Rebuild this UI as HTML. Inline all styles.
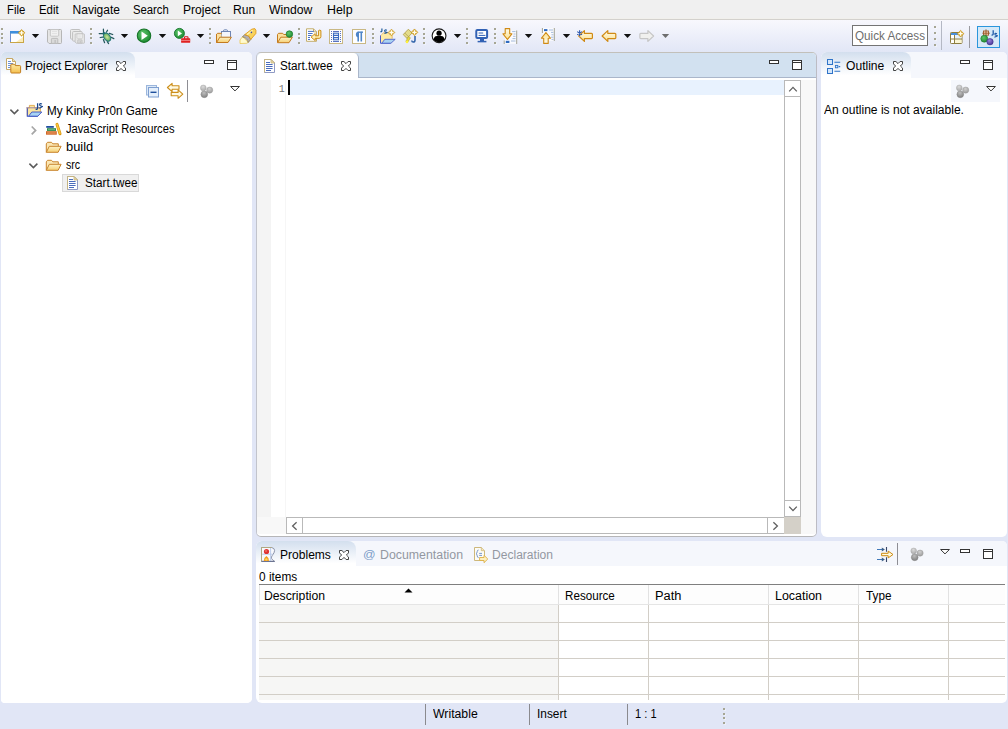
<!DOCTYPE html><html><head><meta charset="utf-8"><title>Eclipse</title><style>
html,body{margin:0;padding:0}
body{width:1008px;height:729px;overflow:hidden;background:#e1e6f6;position:relative;
 font-family:"Liberation Sans",sans-serif;font-size:12px;color:#000}
div,span,svg{position:absolute;box-sizing:border-box}
.t{white-space:nowrap;line-height:14px;height:14px;transform-origin:0 0}
#menubar{left:0;top:0;width:1008px;height:19px;background:#f0f0f0}
#menuline{left:0;top:18px;width:1008px;height:2px;background:linear-gradient(#f1f0ec 50%,#d3d1cd 50%)}
#toolbar{left:0;top:20px;width:1008px;height:33px;background:linear-gradient(#f8f8fd,#e1e6f6)}
.panel{background:#fff;border-radius:7px 7px 7px 7px;overflow:hidden}
.hd{left:0;top:0;right:0;height:25px;background:#f5f7fc}
.dots i{position:absolute;left:0;width:2px;height:2px;background:#a6a694;box-shadow:1px 1px 0 rgba(255,255,255,.4)}
.dd{width:0;height:0;border-left:3.5px solid transparent;border-right:3.5px solid transparent;border-top:4px solid #111}
.sep{width:1px;background:#a9a9a9}
</style></head><body>
<div id="menubar"></div><div id="menuline"></div><div id="toolbar"></div>
<span class="t" id="t_m_file" style="left:7.06px;top:3px;transform:scaleX(0.9444)">File</span>
<span class="t" id="t_m_edit" style="left:38.65px;top:3px;transform:scaleX(0.95)">Edit</span>
<span class="t" id="t_m_nav" style="left:72.6px;top:3px;transform:scaleX(1)">Navigate</span>
<span class="t" id="t_m_search" style="left:133.36px;top:3px;transform:scaleX(0.9417)">Search</span>
<span class="t" id="t_m_proj" style="left:182.5px;top:3px;transform:scaleX(1.0028)">Project</span>
<span class="t" id="t_m_run" style="left:233.49px;top:3px;transform:scaleX(1.01)">Run</span>
<span class="t" id="t_m_win" style="left:269.2px;top:3px;transform:scaleX(1.0163)">Window</span>
<span class="t" id="t_m_help" style="left:326.67px;top:3px;transform:scaleX(1.0348)">Help</span>
<div class="panel" id="left" style="left:1px;top:52px;width:251px;height:651px;border-radius:5px 5px 5px 4px"><div class="hd" style="height:26px"></div><div style="left:0;top:0;width:134px;height:26px;background:linear-gradient(#d3dfee,#e9eff7 45%,#ffffff 90%);border-radius:0 8px 0 0"></div><div style="left:0;top:26px;width:252px;height:625px;background:#fff"></div></div>
<svg style="left:116px;top:61px" width="10" height="10" viewBox="0 0 10 10"><path d="M0.5 0.5h2.4l2.1 2.1l2.1-2.1h2.4v2.4l-2.1 2.1l2.1 2.1v2.4h-2.4l-2.1-2.1l-2.1 2.1h-2.4v-2.4l2.1-2.1l-2.1-2.1z" fill="#fff" stroke="#363636" stroke-width="0.95" stroke-linejoin="miter"/></svg>
<div style="left:204px;top:60px;width:10px;height:4px;border:1px solid #333;background:#fff"></div><div style="left:227px;top:60px;width:10px;height:10px;border:1px solid #333;background:#fff"><div style="left:0;top:1px;width:8px;height:1px;background:#333"></div></div>
<svg style="left:229px;top:84.5px" width="12" height="8" viewBox="-1 -1 12 8"><path d="M0.6 0.5h8.8L5 4.9z" fill="#fff" stroke="#333" stroke-width="1" stroke-linejoin="miter"/></svg>
<div class="sep" style="left:187px;top:80px;height:22px;background:#8e8e94"></div>
<div style="left:62px;top:174px;width:77px;height:18px;background:#f0f0f0;border:1px solid #d9d9d9"></div>
<svg style="left:9.2px;top:108px" width="11" height="8" viewBox="-1 -1 11 8"><path d="M0.4 0.6L4.4 4.6L8.4 0.6" fill="none" stroke="#5a5a5a" stroke-width="1.5"/></svg>
<svg style="left:30.2px;top:125px" width="8" height="11" viewBox="-1 -1 8 11"><path d="M0.7 0.5L4.6 4.4L0.7 8.3" fill="none" stroke="#a6a6a6" stroke-width="1.7"/></svg>
<svg style="left:28.2px;top:162px" width="11" height="8" viewBox="-1 -1 11 8"><path d="M0.4 0.6L4.4 4.6L8.4 0.6" fill="none" stroke="#5a5a5a" stroke-width="1.5"/></svg>
<div class="panel" id="editor" style="left:256px;top:52px;width:561px;height:485px;border:1px solid #b6b6b8;border-top-color:#c2c0ba;border-left-color:#c2c4cc;border-right-color:#bcbcc4;border-radius:5px"><div class="hd" style="background:#d2e1f0;height:24px"></div><div style="left:0;top:0;width:102px;height:25px;background:#fff;border-radius:5px 5px 0 0;border-right:1px solid #aab6ca"></div><div style="left:101px;top:24px;width:458px;height:1px;background:#aab6ca"></div><div style="left:0;top:27px;width:14px;height:437px;background:#f4f4f4"></div><div style="left:0;top:464px;width:29px;height:17px;background:#f8f8f8"></div><div style="left:28px;top:27px;width:1px;height:437px;background:#f6f6f6"></div><div style="left:33px;top:27px;width:494px;height:15px;background:#e8f2fe"></div><div style="left:31px;top:27px;width:2px;height:15px;background:#000"></div><div style="left:527px;top:27px;width:17px;height:437px;background:#fff;border:1px solid #b9b9b9"></div><div style="left:527px;top:27px;width:17px;height:17px;background:#fff;border:1px solid #b9b9b9"></div><div style="left:527px;top:447px;width:17px;height:17px;background:#fff;border:1px solid #b9b9b9"></div><div style="left:29px;top:464px;width:499px;height:17px;background:#fff;border:1px solid #b9b9b9"></div><div style="left:29px;top:464px;width:17px;height:17px;background:#fff;border:1px solid #b9b9b9"></div><div style="left:510px;top:464px;width:18px;height:17px;background:#fff;border:1px solid #b9b9b9"></div><div style="left:527px;top:464px;width:17px;height:17px;background:#d4d0c8"></div><div style="left:544px;top:27px;width:15px;height:454px;background:#f8f8f8"></div></div>
<svg style="left:341px;top:61px" width="10" height="10" viewBox="0 0 10 10"><path d="M0.5 0.5h2.4l2.1 2.1l2.1-2.1h2.4v2.4l-2.1 2.1l2.1 2.1v2.4h-2.4l-2.1-2.1l-2.1 2.1h-2.4v-2.4l2.1-2.1l-2.1-2.1z" fill="#fff" stroke="#363636" stroke-width="0.95" stroke-linejoin="miter"/></svg>
<div style="left:769px;top:60px;width:10px;height:4px;border:1px solid #333;background:#fff"></div><div style="left:792px;top:60px;width:10px;height:10px;border:1px solid #333;background:#fff"><div style="left:0;top:1px;width:8px;height:1px;background:#333"></div></div>
<svg style="left:787.5px;top:84.5px" width="10" height="10" viewBox="0 0 10 10"><path d="M1.2 6.4L5 2.4L8.8 6.4" fill="none" stroke="#606060" stroke-width="1.3"/></svg>
<svg style="left:787.5px;top:503.5px" width="10" height="10" viewBox="0 0 10 10"><path d="M1.2 2.6L5 6.6L8.8 2.6" fill="none" stroke="#606060" stroke-width="1.3"/></svg>
<svg style="left:290px;top:520.5px" width="10" height="10" viewBox="0 0 10 10"><path d="M6.6 1.2L2.6 5L6.6 8.8" fill="none" stroke="#606060" stroke-width="1.3"/></svg>
<svg style="left:770px;top:520.5px" width="10" height="10" viewBox="0 0 10 10"><path d="M3.4 1.2L7.4 5L3.4 8.8" fill="none" stroke="#606060" stroke-width="1.3"/></svg>
<div class="panel" id="outlinep" style="left:821px;top:52px;width:186px;height:485px;border-radius:6px 5px 5px 6px"><div class="hd" style="height:26px"></div><div style="left:0;top:0;width:90px;height:26px;background:linear-gradient(#d3dfee,#e9eff7 45%,#ffffff 90%);border-radius:0 8px 0 0"></div><div style="left:130px;top:28px;width:49px;height:22px;background:#f5f7fc"></div></div>
<svg style="left:893px;top:61px" width="10" height="10" viewBox="0 0 10 10"><path d="M0.5 0.5h2.4l2.1 2.1l2.1-2.1h2.4v2.4l-2.1 2.1l2.1 2.1v2.4h-2.4l-2.1-2.1l-2.1 2.1h-2.4v-2.4l2.1-2.1l-2.1-2.1z" fill="#fff" stroke="#363636" stroke-width="0.95" stroke-linejoin="miter"/></svg>
<div style="left:960px;top:60px;width:10px;height:4px;border:1px solid #333;background:#fff"></div><div style="left:983px;top:60px;width:10px;height:10px;border:1px solid #333;background:#fff"><div style="left:0;top:1px;width:8px;height:1px;background:#333"></div></div>
<svg style="left:985px;top:84.5px" width="12" height="8" viewBox="-1 -1 12 8"><path d="M0.6 0.5h8.8L5 4.9z" fill="#fff" stroke="#333" stroke-width="1" stroke-linejoin="miter"/></svg>
<div class="panel" id="bottom" style="left:256px;top:541px;width:751px;height:162px;border-radius:6px 5px 5px 6px"><div class="hd"></div><div style="left:0;top:0;width:100px;height:25px;background:linear-gradient(#d3dfee,#e9eff7 45%,#ffffff 90%);border-radius:0 8px 0 0"></div></div>
<svg style="left:339px;top:550px" width="10" height="10" viewBox="0 0 10 10"><path d="M0.5 0.5h2.4l2.1 2.1l2.1-2.1h2.4v2.4l-2.1 2.1l2.1 2.1v2.4h-2.4l-2.1-2.1l-2.1 2.1h-2.4v-2.4l2.1-2.1l-2.1-2.1z" fill="#fff" stroke="#363636" stroke-width="0.95" stroke-linejoin="miter"/></svg>
<div style="left:960px;top:549px;width:10px;height:4px;border:1px solid #333;background:#fff"></div><div style="left:983px;top:549px;width:10px;height:10px;border:1px solid #333;background:#fff"><div style="left:0;top:1px;width:8px;height:1px;background:#333"></div></div>
<svg style="left:939px;top:547.5px" width="12" height="8" viewBox="-1 -1 12 8"><path d="M0.6 0.5h8.8L5 4.9z" fill="#fff" stroke="#333" stroke-width="1" stroke-linejoin="miter"/></svg>
<div class="sep" style="left:897px;top:543px;height:22px;background:#8e8e94"></div>
<div style="left:259px;top:584px;width:746px;height:1px;background:#7f7f7f"></div>
<div style="left:259px;top:585px;width:746px;height:19px;background:#fdfdfd"></div>
<div style="left:259px;top:604px;width:746px;height:1px;background:#e5e5e5"></div>
<div style="left:259px;top:605px;width:299px;height:95px;background:#f6f6f5"></div>
<div style="left:259px;top:622px;width:746px;height:1px;background:#d2cec7"></div>
<div style="left:259px;top:640px;width:746px;height:1px;background:#d2cec7"></div>
<div style="left:259px;top:658px;width:746px;height:1px;background:#d2cec7"></div>
<div style="left:259px;top:676px;width:746px;height:1px;background:#d2cec7"></div>
<div style="left:259px;top:694px;width:746px;height:1px;background:#d2cec7"></div>
<div style="left:558px;top:605px;width:1px;height:95px;background:#d2cec7"></div>
<div style="left:558px;top:585px;width:1px;height:19px;background:#e2e2e2"></div>
<div style="left:648px;top:605px;width:1px;height:95px;background:#d2cec7"></div>
<div style="left:648px;top:585px;width:1px;height:19px;background:#e2e2e2"></div>
<div style="left:768px;top:605px;width:1px;height:95px;background:#d2cec7"></div>
<div style="left:768px;top:585px;width:1px;height:19px;background:#e2e2e2"></div>
<div style="left:858px;top:605px;width:1px;height:95px;background:#d2cec7"></div>
<div style="left:858px;top:585px;width:1px;height:19px;background:#e2e2e2"></div>
<div style="left:948px;top:605px;width:1px;height:95px;background:#d2cec7"></div>
<div style="left:948px;top:585px;width:1px;height:19px;background:#e2e2e2"></div>
<div style="left:259px;top:585px;width:1px;height:19px;background:#e5e5e5"></div>
<svg style="left:404px;top:588px" width="9" height="5" viewBox="0 0 9 5"><path d="M0.5 4.5L4.5 0.5L8.5 4.5z" fill="#000"/></svg>
<div class="sep" style="left:425px;top:704px;height:21px;background:#8a8a8e"></div>
<div class="sep" style="left:529px;top:704px;height:21px;background:#8a8a8e"></div>
<div class="sep" style="left:627px;top:704px;height:21px;background:#8a8a8e"></div>
<div class="dots" style="left:723px;top:708px;width:2px;height:16px"><i style="top:0px"></i><i style="top:4.5px"></i><i style="top:9px"></i><i style="top:13.5px"></i></div>
<div class="dots" style="left:1px;top:28px;width:2px;height:16px"><i style="top:0px"></i><i style="top:4.5px"></i><i style="top:9px"></i><i style="top:13.5px"></i></div>
<div class="dots" style="left:90px;top:28px;width:2px;height:16px"><i style="top:0px"></i><i style="top:4.5px"></i><i style="top:9px"></i><i style="top:13.5px"></i></div>
<div class="dots" style="left:209px;top:28px;width:2px;height:16px"><i style="top:0px"></i><i style="top:4.5px"></i><i style="top:9px"></i><i style="top:13.5px"></i></div>
<div class="dots" style="left:298px;top:28px;width:2px;height:16px"><i style="top:0px"></i><i style="top:4.5px"></i><i style="top:9px"></i><i style="top:13.5px"></i></div>
<div class="dots" style="left:372px;top:28px;width:2px;height:16px"><i style="top:0px"></i><i style="top:4.5px"></i><i style="top:9px"></i><i style="top:13.5px"></i></div>
<div class="dots" style="left:423px;top:28px;width:2px;height:16px"><i style="top:0px"></i><i style="top:4.5px"></i><i style="top:9px"></i><i style="top:13.5px"></i></div>
<div class="dots" style="left:466px;top:28px;width:2px;height:16px"><i style="top:0px"></i><i style="top:4.5px"></i><i style="top:9px"></i><i style="top:13.5px"></i></div>
<div class="dots" style="left:494px;top:28px;width:2px;height:16px"><i style="top:0px"></i><i style="top:4.5px"></i><i style="top:9px"></i><i style="top:13.5px"></i></div>
<svg style="left:31px;top:33px" width="9" height="6" viewBox="-1 -1 9 6"><path d="M-0.2 0h7.4L3.5 4.1z" fill="#111"/></svg>
<svg style="left:120.3px;top:33px" width="9" height="6" viewBox="-1 -1 9 6"><path d="M-0.2 0h7.4L3.5 4.1z" fill="#111"/></svg>
<svg style="left:158px;top:33px" width="9" height="6" viewBox="-1 -1 9 6"><path d="M-0.2 0h7.4L3.5 4.1z" fill="#111"/></svg>
<svg style="left:196px;top:33px" width="9" height="6" viewBox="-1 -1 9 6"><path d="M-0.2 0h7.4L3.5 4.1z" fill="#111"/></svg>
<svg style="left:262px;top:33px" width="9" height="6" viewBox="-1 -1 9 6"><path d="M-0.2 0h7.4L3.5 4.1z" fill="#111"/></svg>
<svg style="left:453px;top:33px" width="9" height="6" viewBox="-1 -1 9 6"><path d="M-0.2 0h7.4L3.5 4.1z" fill="#111"/></svg>
<svg style="left:523.8px;top:33px" width="9" height="6" viewBox="-1 -1 9 6"><path d="M-0.2 0h7.4L3.5 4.1z" fill="#111"/></svg>
<svg style="left:562px;top:33px" width="9" height="6" viewBox="-1 -1 9 6"><path d="M-0.2 0h7.4L3.5 4.1z" fill="#111"/></svg>
<svg style="left:623px;top:33px" width="9" height="6" viewBox="-1 -1 9 6"><path d="M-0.2 0h7.4L3.5 4.1z" fill="#111"/></svg>
<svg style="left:661px;top:33px" width="9" height="6" viewBox="-1 -1 9 6"><path d="M-0.2 0h7.4L3.5 4.1z" fill="#6e6e6e"/></svg>
<div style="left:852px;top:25px;width:76px;height:21px;background:#fff;border:1px solid #747474"></div>
<div class="dots" style="left:934.3px;top:26px;width:2px;height:22px"><i style="top:0px"></i><i style="top:6.1px"></i><i style="top:12.2px"></i><i style="top:18.3px"></i></div>
<div class="sep" style="left:941px;top:21px;height:29px;background:#b4b8c4"></div>
<div class="sep" style="left:969px;top:26px;height:22px;background:#9a9aa0"></div>
<div style="left:977px;top:26px;width:23px;height:22px;background:#d6e9f8;border:1px solid #2a96dc"></div>
<svg style="left:0;top:0" width="1008" height="729" viewBox="0 0 1008 729"><defs>
<linearGradient id="gFold" x1="0" y1="0" x2="0" y2="1"><stop offset="0" stop-color="#fdf3c8"/><stop offset="1" stop-color="#f6cf72"/></linearGradient>
<linearGradient id="gFoldY" x1="0" y1="0" x2="0" y2="1"><stop offset="0" stop-color="#fdeca8"/><stop offset="1" stop-color="#f4be4c"/></linearGradient>
<linearGradient id="gBlue" x1="0" y1="0" x2="0" y2="1"><stop offset="0" stop-color="#a9c8f4"/><stop offset="1" stop-color="#4a78d0"/></linearGradient>
<linearGradient id="gArr" x1="0" y1="0" x2="0" y2="1"><stop offset="0" stop-color="#fffdf0"/><stop offset="1" stop-color="#fce08a"/></linearGradient>
<radialGradient id="gGreen" cx="0.4" cy="0.35" r="0.7"><stop offset="0" stop-color="#5cc46a"/><stop offset="1" stop-color="#1c8a30"/></radialGradient>
<radialGradient id="gGray1" cx="0.45" cy="0.3" r="0.75"><stop offset="0" stop-color="#dadada"/><stop offset="1" stop-color="#a8a8a8"/></radialGradient><radialGradient id="gGray2" cx="0.45" cy="0.3" r="0.75"><stop offset="0" stop-color="#d0d0d0"/><stop offset="1" stop-color="#989898"/></radialGradient><radialGradient id="gGray3" cx="0.45" cy="0.3" r="0.75"><stop offset="0" stop-color="#bebebe"/><stop offset="1" stop-color="#7c7c7c"/></radialGradient>
<radialGradient id="gPurp" cx="0.4" cy="0.3" r="0.7"><stop offset="0" stop-color="#9a86d8"/><stop offset="1" stop-color="#4b3a9c"/></radialGradient>
<radialGradient id="gBug" cx="0.5" cy="0.5" r="0.6"><stop offset="0" stop-color="#d4e89a"/><stop offset="1" stop-color="#3f9a50"/></radialGradient>
</defs><g transform="translate(10 29)"><rect x="0.5" y="2.5" width="13" height="11" fill="#fff" stroke="#c9a646"/><path d="M0.5 4.5V13" stroke="#6f8fd0"/><path d="M13 8L6 13h7z" fill="#fbe7a8" opacity=".8"/><rect x="0" y="2" width="9.5" height="2.6" fill="#3f8fdc"/><g transform="translate(11.6 3.8) scale(0.86)"><path d="M0-3.9L3.9 0L0 3.9L-3.9 0z" fill="#d9a92c" stroke="#c08c10" stroke-width="0.6"/><path d="M0-2.5V2.5M-2.5 0H2.5" stroke="#fffdf0" stroke-width="1.5"/></g></g><g transform="translate(47 29)"><path d="M1.5 0.5h12a1 1 0 0 1 1 1v12a1 1 0 0 1-1 1h-11.4l-1.6-1.6v-11.4a1 1 0 0 1 1-1z" fill="#e6e6e6" stroke="#b6b6b6"/><path d="M3.3 0.6v5.6a1 1 0 0 0 1 1h6.4a1 1 0 0 0 1-1v-5.6z" fill="#f1f1f1" stroke="#c2c2c2" stroke-width="0.9"/><path d="M5 2.6h5M5 4.6h5" stroke="#dcdcdc" stroke-width="0.8"/><path d="M4.4 14.4v-4.2a0.8 0.8 0 0 1 .8-.8h4.8a0.8 0.8 0 0 1 .8 .8v4.2z" fill="#dadada" stroke="#b8b8b8" stroke-width="0.9"/><rect x="7.4" y="11" width="1.6" height="3.2" fill="#c4c4c4"/></g><g transform="translate(70 29)"><rect x="0.5" y="0.5" width="9.6" height="9.6" rx="1" fill="#ececec" stroke="#c0c0c0"/><rect x="2.6" y="2.5" width="9.6" height="9.6" rx="1" fill="#ececec" stroke="#c0c0c0"/><g transform="translate(4.8 4.5) scale(0.67)"><path d="M1.5 0.5h12a1 1 0 0 1 1 1v12a1 1 0 0 1-1 1h-11.4l-1.6-1.6v-11.4a1 1 0 0 1 1-1z" fill="#e6e6e6" stroke="#b6b6b6"/><path d="M3.3 0.6v5.6a1 1 0 0 0 1 1h6.4a1 1 0 0 0 1-1v-5.6z" fill="#f1f1f1" stroke="#c2c2c2" stroke-width="0.9"/><path d="M5 2.6h5M5 4.6h5" stroke="#dcdcdc" stroke-width="0.8"/><path d="M4.4 14.4v-4.2a0.8 0.8 0 0 1 .8-.8h4.8a0.8 0.8 0 0 1 .8 .8v4.2z" fill="#dadada" stroke="#b8b8b8" stroke-width="0.9"/><rect x="7.4" y="11" width="1.6" height="3.2" fill="#c4c4c4"/></g></g><g transform="translate(0 0)"><path d="M103.6 32.8L103.4 29.2M106.4 32.2L107.5 30.2M99.2 33.6H102.6M100.2 37.5L102.8 37.2M103.4 39.6L104.6 42.7M107.3 41.6L108.6 43.6M109.4 33.3L112.7 34.5M111.2 37.3L113.8 38.6" stroke="#25585c" stroke-width="1.25" fill="none" stroke-linecap="round"/><circle cx="104" cy="33.6" r="1.5" fill="#1f6a70"/><ellipse cx="107.1" cy="37.1" rx="3.1" ry="4.5" transform="rotate(-38 107.1 37.1)" fill="url(#gBug)" stroke="#1f7078" stroke-width="1"/></g><g transform="translate(144 35.7)"><circle r="6.7" fill="url(#gGreen)" stroke="#167428" stroke-width="1.1"/><path d="M-2.5-4.3L3.8 0L-2.5 4.3z" fill="#fff"/></g><g transform="translate(174 28)"><circle cx="5.4" cy="5.4" r="5" fill="url(#gGreen)" stroke="#14742a" stroke-width="0.9"/><path d="M3.8 2.6L8 5.4L3.8 8.2z" fill="#fff"/><rect x="10.4" y="8.8" width="3.6" height="2.4" rx="0.7" fill="none" stroke="#d41818" stroke-width="1.1"/><rect x="7.1" y="10.3" width="9.1" height="4.5" rx="0.6" fill="#e02020"/><path d="M7.1 12.4h9.1" stroke="#f49a9a" stroke-width="0.8"/></g><g transform="translate(216 29)"><rect x="7.5" y="0.8" width="4" height="2.4" rx="1" fill="none" stroke="#6f86b4" stroke-width="1"/><rect x="5.5" y="2.5" width="9" height="6" fill="#f4f6fb" stroke="#6f86b4"/><path d="M0.5 13.5v-8l1-1.2h4.3" fill="#fbe0a0" stroke="#c47a1e"/><path d="M0.5 13.5v-8h5v3h0" fill="#fbe0a0"/><path d="M0.6 13.5l3.2-5.3h11.6l-3.4 5.3z" fill="url(#gFold)" stroke="#c47a1e" stroke-linejoin="round"/><path d="M0.5 5v8.5" stroke="#c47a1e"/></g><g transform="translate(0 0)"><path d="M242.6 36.6L240 40V43.5L246.6 43.3L248.2 42.4z" fill="#fffbd0" stroke="#ecc64c" stroke-width="0.8" stroke-linejoin="round"/><path d="M242.4 36.8L244.8 34.6Q249.6 35 250.8 39.4L248.2 42.5Q247.6 38 242.4 36.8z" fill="#b4aeb0" stroke="#8c7c4c" stroke-width="0.8" stroke-linejoin="round"/><path d="M244.8 34.6L251.8 29.2L254.8 28.6L255.9 30.2V33.4L250.8 39.4Q249.6 35 244.8 34.6z" fill="#f8d25c" stroke="#e09a1c" stroke-width="0.9" stroke-linejoin="round"/><path d="M247 34.6L252.6 30.2" stroke="#fff2a8" stroke-width="1.4"/><circle cx="251.4" cy="32.4" r="0.8" fill="#3a48a0"/></g><g transform="translate(277 31.5)"><path d="M0.5 11v-8l1-1.2h4.2l1 1.2h5v2.6" fill="#fbe0a0" stroke="#c47a1e"/><path d="M0.6 11.2l3.2-5.5h11.6l-3.4 5.5z" fill="url(#gFold)" stroke="#c47a1e" stroke-linejoin="round"/><circle cx="12.4" cy="2.6" r="3.3" fill="url(#gGreen)" stroke="#1f7a30" stroke-width="0.7"/></g><g transform="translate(0 0)"><path d="M306.5 28.8H313.5L316.5 31.8V41.3H306.5z" fill="#fff" stroke="#c4ae6c"/><path d="M313.5 28.8V31.8H316.5" fill="none" stroke="#c4ae6c"/><path d="M308 31.4H313.8M308 33.5H312.6M308 35.5H311.6M308 37.5H310M308 39.5H310" stroke="#4a72c8" stroke-width="1"/><path d="M318.6 30.6Q319.8 29.6 320.9 30.6V36.6Q320.9 38.3 319.2 38.3H315.2V40.6L311.1 37.1L315.2 33.6V35.8H318.6z" fill="#fdf0b8" stroke="#cc8a10" stroke-width="1" stroke-linejoin="round"/></g><g transform="translate(0 0)"><rect x="329.5" y="29.5" width="13" height="14" fill="#fff" stroke="#c9b884"/><path d="M331.5 31v12M340.5 31v12" stroke="#5a72c0" stroke-width="1" stroke-dasharray="1 1"/><path d="M333 31.5h6M333 41.5h6" stroke="#5a72c0" stroke-width="1"/><rect x="333.5" y="33.2" width="5" height="6.6" fill="#fff" stroke="#3a6ac0" stroke-width="1.1"/><path d="M334 35.4h4M334 37.6h4" stroke="#3a6ac0" stroke-width="1.1"/></g><g transform="translate(352 29)"><rect x="0.5" y="0.5" width="13" height="14" fill="#fff" stroke="#c9b884"/><path d="M6.2 12.5v-9.8M9.3 12.5v-9.8" stroke="#4f86c8" stroke-width="1.6"/><path d="M11 3.2H6.6" stroke="#4f86c8" stroke-width="1.4"/><path d="M6.8 2.5a2.9 2.9 0 0 0 0 5.8z" fill="#4f86c8"/></g><g transform="translate(0 0)"><path d="M380.5 42.5V35.8L383.6 32.7H387.6L389 34.2H392.2V39.3" fill="#fdeaa4" stroke="#dca03c" stroke-width="0.9" stroke-dasharray="1.2 0.6"/><path d="M380.5 35.5V43.3H390.6" fill="none" stroke="#4a5cc8" stroke-width="1"/><path d="M381.8 43.2L384.8 39.3H395.2L391 43.2z" fill="#a9d2f2" stroke="#5064c8" stroke-width="0.9" stroke-linejoin="round"/><path d="M381.9 28.4V30.8Q381.9 32 380.4 31.6" fill="none" stroke="#1f5a9a" stroke-width="1.2"/><path d="M386.9 30.2Q384.6 29.4 384.6 30.7T386.6 32.2T384.4 33.5" fill="none" stroke="#1f5a9a" stroke-width="1.1"/><g transform="translate(391.5 32.5) scale(0.86)"><path d="M0-3.9L3.9 0L0 3.9L-3.9 0z" fill="#d9a92c" stroke="#c08c10" stroke-width="0.6"/><path d="M0-2.5V2.5M-2.5 0H2.5" stroke="#fffdf0" stroke-width="1.5"/></g></g><g transform="translate(0 0)"><path d="M403.2 34.6L408.4 29.2L412 33L407 38.4z" fill="#e4dc8c" stroke="#b4a450" stroke-width="0.9" stroke-linejoin="round"/><path d="M404.8 33L408.6 36.8" stroke="#b4a450" stroke-width="0.8"/><path d="M408.6 36.4L410.4 37.8L407.6 42.4L405.8 41.4z" fill="#e8dc3c" stroke="#b0a030" stroke-width="0.6"/><circle cx="407" cy="42" r="1.3" fill="#fff23c"/><path d="M415 36V40.2Q415 42 413.2 42Q411.8 42 411.8 40.4" fill="none" stroke="#2f62a8" stroke-width="1.5"/><g transform="translate(414.5 32.3) scale(0.86)"><path d="M0-3.9L3.9 0L0 3.9L-3.9 0z" fill="#d9a92c" stroke="#c08c10" stroke-width="0.6"/><path d="M0-2.5V2.5M-2.5 0H2.5" stroke="#fffdf0" stroke-width="1.5"/></g></g><g transform="translate(439.05 35.7)"><circle r="6.9" fill="#fff" stroke="#1c1c1c" stroke-width="1.15"/><circle cx="0" cy="-2.5" r="2.6" fill="#000"/><path d="M-5.4 4.2Q-5.2 0.4-2.2 0.2H2.2Q5.2 0.4 5.4 4.2Q3 6.6 0 6.6T-5.4 4.2z" fill="#000"/></g><g transform="translate(0 0)"><rect x="476.3" y="30.1" width="10.8" height="7.8" rx="1" fill="#fff" stroke="#3262b4" stroke-width="2"/><path d="M478.6 33H483.2M478.6 35.4H485.4" stroke="#3262b4" stroke-width="1"/><path d="M480 38.8H484V41H480z" fill="#3262b4"/><path d="M477.6 41.6H486.4" stroke="#3262b4" stroke-width="1.5"/></g><g transform="translate(502.5 28)"><rect x="2.4" y="2.4" width="11.4" height="13.4" fill="#fff" opacity="0.75"/><path d="M14.2 2.5v13.5M1.7 12.5v3.5" stroke="#a4a494" stroke-width="1"/><path d="M9.6 3.6h3.4M11 6h2M10.6 8.3h2.4M10 10.6h3M8.5 13h4.5" stroke="#9cb4d8" stroke-width="0.9"/><rect x="3.3" y="12.8" width="3.6" height="2.2" fill="#2f6ac0"/><path d="M2.7 0.6H7.2V5.8H9.4L4.95 11.5L0.5 5.8H2.7z" fill="url(#gArr)" stroke="#d08a14" stroke-width="1.1" stroke-linejoin="round"/></g><g transform="translate(541 28)"><rect x="1.8" y="0.2" width="11" height="12.6" fill="#fff" opacity="0.75"/><path d="M13.3 0v13M1.4 0v5" stroke="#a4a494" stroke-width="1"/><path d="M8 2h4M10 4.4h2.4M10.5 6.8h2M10 9.2h2.4M10.5 11.4h2" stroke="#9cb4d8" stroke-width="0.9"/><rect x="3" y="1.1" width="3.4" height="2" fill="#2f6ac0"/><g transform="translate(0 16) scale(1 -1)"><path d="M2.7 0.6H7.2V5.8H9.4L4.95 11.5L0.5 5.8H2.7z" fill="url(#gArr)" stroke="#d08a14" stroke-width="1.1" stroke-linejoin="round"/></g></g><g transform="translate(578 30)"><path d="M0.7 6L6.4 0.6v2.8h7.2a0.8 0.8 0 0 1 .8 .8v3.6a0.8 0.8 0 0 1-.8 .8H6.4v2.8z" fill="url(#gArr)" stroke="#d08a14" stroke-width="1.2" stroke-linejoin="round"/><path d="M1.6 0.2v6M-0.8 1.6l4.8 3.2M4 1.6l-4.8 3.2" stroke="#2f59b0" stroke-width="1.1"/></g><g transform="translate(601.4 30)"><path d="M0.7 6L6.4 0.6v2.8h7.2a0.8 0.8 0 0 1 .8 .8v3.6a0.8 0.8 0 0 1-.8 .8H6.4v2.8z" fill="url(#gArr)" stroke="#d08a14" stroke-width="1.2" stroke-linejoin="round"/></g><g transform="translate(639.3 30)"><g transform="translate(15 0) scale(-1 1)"><path d="M0.7 6L6.4 0.6v2.8h7.2a0.8 0.8 0 0 1 .8 .8v3.6a0.8 0.8 0 0 1-.8 .8H6.4v2.8z" fill="#f0f0ee" stroke="#c6c6c6" stroke-width="1.2" stroke-linejoin="round"/></g></g><g transform="translate(0 0)"><rect x="950.5" y="32.5" width="11.5" height="11" rx="0.8" fill="#fff" stroke="#8e7e40"/><rect x="951" y="33" width="7.6" height="2" fill="#4a90dc"/><path d="M955 39.4H961.6V43H955z" fill="#fbf6d4"/><path d="M955 35.2H961.6V38.6H955z" fill="#e4f0fc"/><path d="M954.5 35V43.5M950.5 39H962" stroke="#8e7e40"/><g transform="translate(960.6 33.7) scale(0.86)"><path d="M0-3.9L3.9 0L0 3.9L-3.9 0z" fill="#d9a92c" stroke="#c08c10" stroke-width="0.6"/><path d="M0-2.5V2.5M-2.5 0H2.5" stroke="#fffdf0" stroke-width="1.5"/></g></g><g transform="translate(0 0)"><rect x="983.5" y="31" width="5" height="4.2" fill="#f6d8c0" stroke="#9a5a2c" stroke-width="0.9"/><path d="M986 29.4V36.8M982.4 33.2H989.8" stroke="#9a5a2c" stroke-width="1"/><circle cx="984.3" cy="38.7" r="3.5" fill="url(#gGreen)" stroke="#1f7a30" stroke-width="0.6"/><circle cx="990" cy="41.7" r="3.2" fill="url(#gPurp)" stroke="#3f2f8a" stroke-width="0.6"/><path d="M993.2 30.3V33.8Q993.2 35.3 991.6 35" fill="none" stroke="#1f5aa8" stroke-width="1.3"/><path d="M997 33.7Q994.8 32.8 994.8 34.1T996.8 35.5T994.4 37.3" fill="none" stroke="#1f5aa8" stroke-width="1.1"/></g><g transform="translate(6 58)"><path d="M0.5 0.5h6l3 3v8h-9z" fill="#fff" stroke="#c4a868"/><path d="M6.5 0.5v3h3" fill="#f0e0b0" stroke="#c4a868"/><path d="M2 3.5h3M2 5.5h5M2 7.5h3M2 9.5h2" stroke="#5b86d0" stroke-width="0.9"/><path d="M4.8 14.2v-7.2a0.8 0.8 0 0 1 .8-.8h2.6l1.2 1.4h4.4a0.8 0.8 0 0 1 .8 .8v5.8a0.8 0.8 0 0 1-.8 .8h-8.2a0.8 0.8 0 0 1-.8-.8z" fill="url(#gFoldY)" stroke="#c27e22" stroke-width="1"/></g><g transform="translate(146 85)"><rect x="0.5" y="0.5" width="10" height="9.5" fill="#dce9f8" stroke="#9bb6dc"/><rect x="2.5" y="2.5" width="10" height="9.5" fill="#e4effb" stroke="#7f9fd0"/><path d="M4.5 7.3h6" stroke="#1f4f9c" stroke-width="1.4"/></g><g transform="translate(166.8 82.8)"><path d="M0.6 4.7L5.3 0.5v2.5h6.9v3.4h-6.9v2.5z" fill="#fffae4" stroke="#cc8e1a" stroke-width="1.1" stroke-linejoin="round"/><g transform="translate(16.6 6.6) scale(-1 1)"><path d="M0.6 4.7L5.3 0.5v2.5h6.9v3.4h-6.9v2.5z" fill="#fffae4" stroke="#cc8e1a" stroke-width="1.1" stroke-linejoin="round"/></g></g><g transform="translate(200 85)"><circle cx="3.3" cy="2.9" r="2.9" fill="url(#gGray1)" stroke="#a4a4a4" stroke-width="0.4"/><circle cx="9.7" cy="5.1" r="3.1" fill="url(#gGray2)" stroke="#969696" stroke-width="0.4"/><circle cx="4.3" cy="9.3" r="3.4" fill="url(#gGray3)" stroke="#808080" stroke-width="0.4"/></g><g transform="translate(956 85)"><circle cx="3.3" cy="2.9" r="2.9" fill="url(#gGray1)" stroke="#a4a4a4" stroke-width="0.4"/><circle cx="9.7" cy="5.1" r="3.1" fill="url(#gGray2)" stroke="#969696" stroke-width="0.4"/><circle cx="4.3" cy="9.3" r="3.4" fill="url(#gGray3)" stroke="#808080" stroke-width="0.4"/></g><g transform="translate(910.4 548)"><circle cx="3.3" cy="2.9" r="2.9" fill="url(#gGray1)" stroke="#a4a4a4" stroke-width="0.4"/><circle cx="9.7" cy="5.1" r="3.1" fill="url(#gGray2)" stroke="#969696" stroke-width="0.4"/><circle cx="4.3" cy="9.3" r="3.4" fill="url(#gGray3)" stroke="#808080" stroke-width="0.4"/></g><g transform="translate(0 0)"><path d="M27.3 115.6V107.8H29.4V105.4H34.4V107.8H40.4V112" fill="#fbe6a0" stroke="#e0a848" stroke-width="0.9"/><path d="M26.2 107.8H40.4" stroke="#9a84a4" stroke-width="1"/><path d="M27.3 108.2V116.3H37.8" fill="none" stroke="#3a50c0" stroke-width="1.1"/><path d="M28.6 116.2L31.8 112H41.8L37.8 116.2z" fill="#a8d4f4" stroke="#3a50c0" stroke-width="0.9" stroke-linejoin="round"/><path d="M37.6 103.2V108Q37.6 109.6 35.6 109.2" fill="none" stroke="#1c4a90" stroke-width="1.3"/><path d="M42 104Q39.6 103 39.6 104.6T41.8 106.2T39.4 108.2" fill="none" stroke="#1c4a90" stroke-width="1.1"/></g><g transform="translate(0 0)"><rect x="46.2" y="126" width="7.6" height="1.8" fill="#1f4fa0"/><rect x="47" y="128.2" width="9" height="2.7" fill="#2a8a4a"/><path d="M48 129.5h7" stroke="#7cc090" stroke-width="0.7"/><rect x="46" y="131.2" width="10.8" height="3.5" fill="#d06a28"/><path d="M47 133h8.8" stroke="#f0a878" stroke-width="0.8"/><path d="M57 124.4L60 133.8" stroke="#d89410" stroke-width="3" stroke-linecap="round"/><path d="M57 124.4L60 133.8" stroke="#fbc83c" stroke-width="1.6" stroke-linecap="round" stroke-dasharray="1.6 1"/></g><g transform="translate(45.8 141.8)"><path d="M0.5 10.5v-8.5l1.2-1.5h4l1.3 1.5h5.5v2.5" fill="#fbe7b4" stroke="#c8842c" stroke-width="1"/><path d="M0.5 10.5l3-6h11.8l-3 6z" fill="url(#gFold)" stroke="#c8842c" stroke-width="1" stroke-linejoin="round"/></g><g transform="translate(45.8 159.8)"><path d="M0.5 10.5v-8.5l1.2-1.5h4l1.3 1.5h5.5v2.5" fill="#fbe7b4" stroke="#c8842c" stroke-width="1"/><path d="M0.5 10.5l3-6h11.8l-3 6z" fill="url(#gFold)" stroke="#c8842c" stroke-width="1" stroke-linejoin="round"/></g><g transform="translate(67 176)"><path d="M0.5 0.5h6.5l3.5 3.5v9.5h-10z" fill="#fff" stroke="#8f9ac4" stroke-width="1"/><path d="M0.5 13.5v-13h6.5l3.5 3.5" fill="none" stroke="#c4b484" stroke-width="1"/><path d="M7 0.5v3.5h3.5z" fill="#ecdca0" stroke="#c4b484" stroke-width="0.8"/><path d="M2 3.5h4M2 5.5h6.6M2 7.5h6.6M2 9.5h6.6M2 11.5h5" stroke="#4a6cbc" stroke-width="1"/></g><g transform="translate(264 59)"><path d="M0.5 0.5h6.5l3.5 3.5v9.5h-10z" fill="#fff" stroke="#8f9ac4" stroke-width="1"/><path d="M0.5 13.5v-13h6.5l3.5 3.5" fill="none" stroke="#c4b484" stroke-width="1"/><path d="M7 0.5v3.5h3.5z" fill="#ecdca0" stroke="#c4b484" stroke-width="0.8"/><path d="M2 3.5h4M2 5.5h6.6M2 7.5h6.6M2 9.5h6.6M2 11.5h5" stroke="#4a6cbc" stroke-width="1"/></g><g transform="translate(0 0)"><rect x="827.5" y="59.5" width="5" height="5" fill="#d4e6fa" stroke="#2f74c8"/><rect x="827.5" y="68.5" width="5" height="5" fill="#d4e6fa" stroke="#2f74c8"/><path d="M834.4 62.3H840.2M834.4 71.3H840.2M838.6 66.6H840.2" stroke="#2f74c8" stroke-width="1.1"/><rect x="835.4" y="65.4" width="2.4" height="2.4" fill="#d4e6fa" stroke="#2f74c8" stroke-width="0.9"/></g><g transform="translate(0 0)"><path d="M261.5 547.5H271.6Q274.6 548.2 274.6 550.4T272.2 555.6T274.6 561.4H261.5z" fill="#f8f9fd" stroke="#8088a0" stroke-width="0.9" stroke-linejoin="round"/><path d="M261.5 561.4V547.5H271.6" fill="none" stroke="#b0a880" stroke-width="1"/><path d="M261.5 561.4H274.6" stroke="#6a7290" stroke-width="1.1"/><path d="M270.6 548V561M262 554.2H272.6" stroke="#b4c6e8" stroke-width="0.9"/><circle cx="266.5" cy="551.5" r="2.6" fill="#e03232"/><circle cx="266" cy="551" r="1" fill="#ee6a62"/><path d="M263.8 561Q263.8 557.4 266.4 556Q269 557.4 269 561z" fill="#f39a1c"/><circle cx="266.4" cy="559.4" r="1.2" fill="#fddc5c"/></g><g transform="translate(0 0)"><path d="M474.5 547.5H481.3L484.5 550.7V560.5H474.5z" fill="#fdfcf6" stroke="#cdb87c" stroke-width="1"/><path d="M481.3 547.5V550.7H484.5" fill="#f4e8b8" stroke="#cdb87c" stroke-width="0.8"/><path d="M478.6 550Q477.2 550 477.2 551.6T476 553.8Q477.2 554 477.2 555.8T478.6 557.6" fill="none" stroke="#6a8cc8" stroke-width="0.9"/><path d="M479.2 553.4H482M479.2 555.4H482" stroke="#6a8cc8" stroke-width="0.9"/><path d="M479.6 557.5H484V555.3L487.8 559L484 562.7V560.5H479.6z" fill="#fdf0c0" stroke="#dcb048" stroke-width="0.9" stroke-linejoin="round"/></g><g transform="translate(0 0)"><path d="M877 549.5H883M877 559.5H883" stroke="#3f78b8" stroke-width="1.1"/><path d="M881.8 547.4L884.9 549.5L881.8 551.6zM881.8 557.4L884.9 559.5L881.8 561.6z" fill="#3c6088"/><path d="M886.5 547V551.7M886.5 557.2V562" stroke="#3a4868" stroke-width="1.1"/><path d="M881.6 553.3H888.2V551.1L893 554.5L888.2 557.9V555.7H881.6z" fill="#fffbe0" stroke="#cc8a10" stroke-width="1" stroke-linejoin="round"/></g></svg>
<span class="t" id="t_pe" style="left:25.33px;top:59px;transform:scaleX(0.9667)">Project Explorer</span>
<span class="t" id="t_tab" style="left:279.82px;top:59px;transform:scaleX(0.9755)">Start.twee</span>
<span class="t" id="t_outline" style="left:846px;top:59px;transform:scaleX(1.0079)">Outline</span>
<span class="t" id="t_nooutline" style="left:824.1px;top:103px;transform:scaleX(1.0036)">An outline is not available.</span>
<span class="t" id="t_qa" style="left:854.8px;top:29px;transform:scaleX(0.9722);color:#6d6d6d">Quick Access</span>
<span class="t" id="t_tr1" style="left:46.72px;top:104px;transform:scaleX(0.975)">My Kinky Pr0n Game</span>
<span class="t" id="t_tr2" style="left:66.3px;top:122px;transform:scaleX(0.9293)">JavaScript Resources</span>
<span class="t" id="t_tr3" style="left:66.43px;top:140px;transform:scaleX(1.0708)">build</span>
<span class="t" id="t_tr4" style="left:66px;top:158px;transform:scaleX(0.8875)">src</span>
<span class="t" id="t_tr5" style="left:84.53px;top:176px;transform:scaleX(0.9717)">Start.twee</span>
<span class="t" id="t_problems" style="left:279.8px;top:548px;transform:scaleX(1.0041)">Problems</span>
<span class="t" id="t_doc" style="left:380.37px;top:548px;transform:scaleX(1.0291);color:#9397a1">Documentation</span>
<span class="t" id="t_decl" style="left:491.69px;top:548px;transform:scaleX(1.0051);color:#9397a1">Declaration</span>
<span class="t" id="t_items" style="left:259.3px;top:570px;transform:scaleX(0.9868)">0 items</span>
<span class="t" id="t_h_desc" style="left:264.48px;top:589px;transform:scaleX(1.0172)">Description</span>
<span class="t" id="t_h_res" style="left:564.73px;top:589px;transform:scaleX(0.97)">Resource</span>
<span class="t" id="t_h_path" style="left:654.63px;top:589px;transform:scaleX(1.0696)">Path</span>
<span class="t" id="t_h_loc" style="left:774.66px;top:589px;transform:scaleX(1.0364)">Location</span>
<span class="t" id="t_h_type" style="left:866.3px;top:589px;transform:scaleX(0.9769)">Type</span>
<span class="t" id="t_s_wr" style="left:433px;top:707px;transform:scaleX(1.0209)">Writable</span>
<span class="t" id="t_s_ins" style="left:537.01px;top:707px;transform:scaleX(0.9897)">Insert</span>
<span class="t" id="t_s_pos" style="left:635.08px;top:707px;transform:scaleX(0.9227)">1 : 1</span>
<span class="t" id="t_ln" style="left:278.8px;top:82.6px;transform:scaleX(1);color:#787878;font-family:'Liberation Mono',monospace;font-size:10px">1</span>
<span class="t" id="t_at" style="left:363.06px;top:548px;transform:scaleX(1.2375);color:#7a9cc8;font-size:10px">@</span>
</body></html>
